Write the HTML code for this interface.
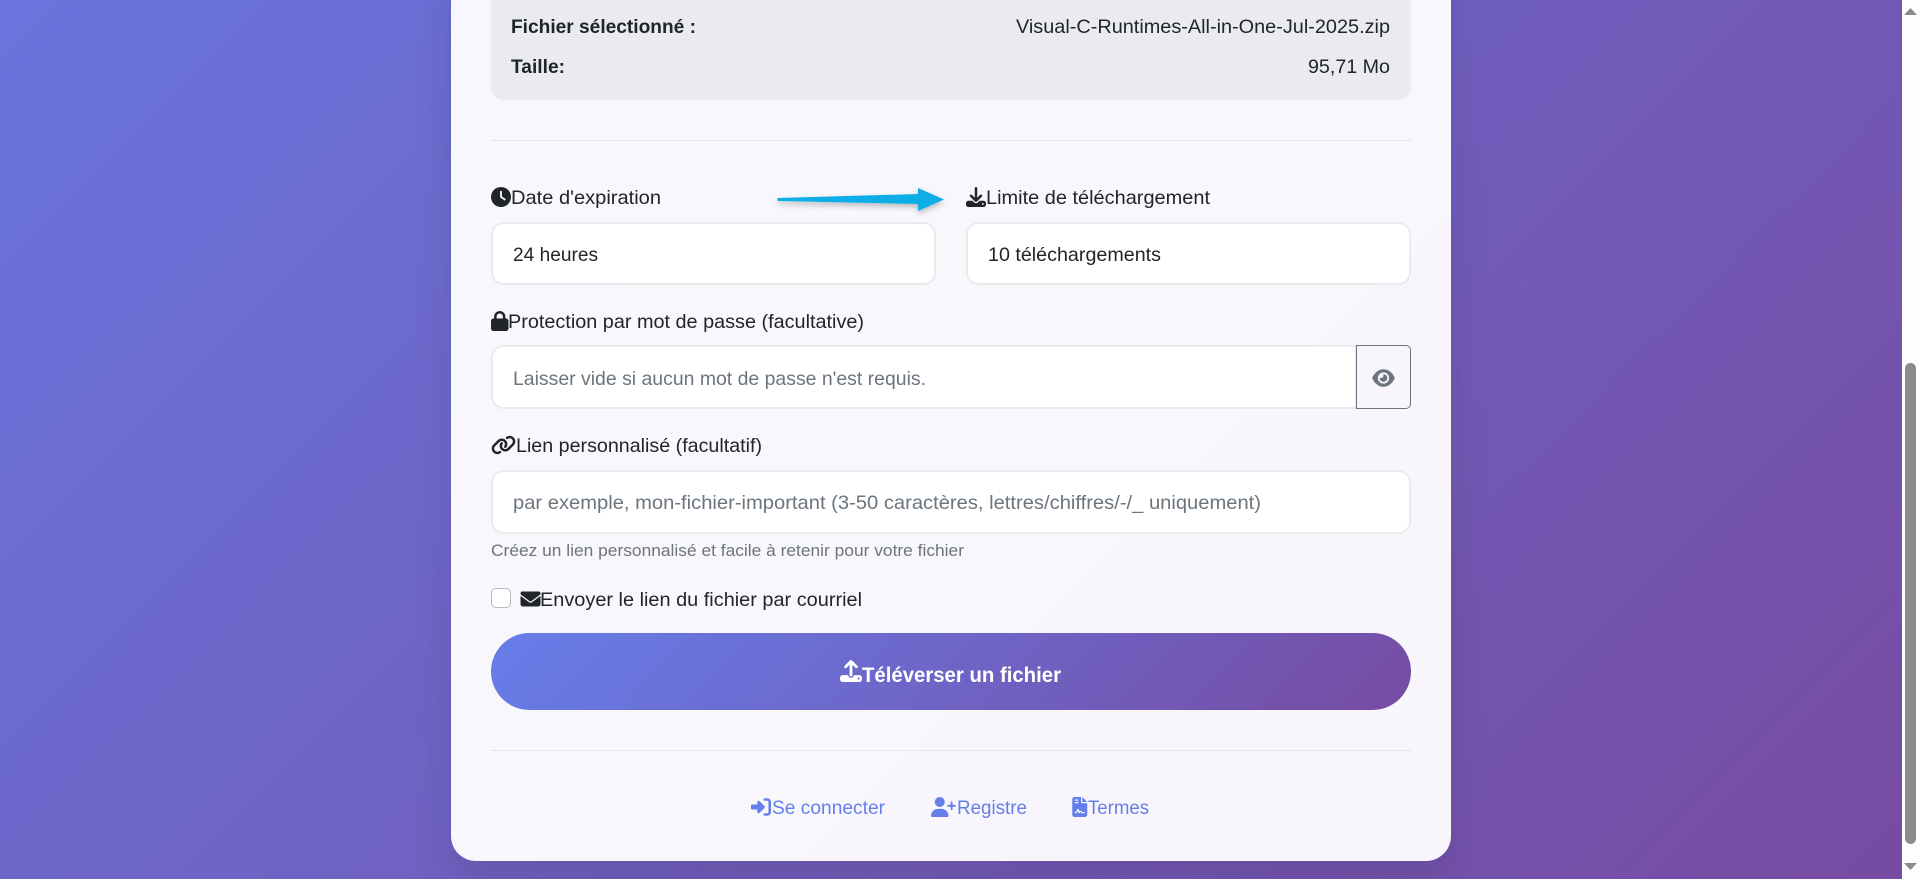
<!DOCTYPE html>
<html lang="fr"><head><meta charset="utf-8"><title>Téléverser un fichier</title>
<style>
html,body{margin:0;padding:0;width:1920px;height:879px;overflow:hidden;background:#fdfdfd}
#clip{position:absolute;left:0;top:0;width:1902px;height:879px;overflow:hidden}
#bg{position:absolute;left:0;top:-636px;width:1902px;height:1515px;background:linear-gradient(135deg,#667eea 0%,#764ba2 100%)}
#card{position:absolute;left:451px;top:-200px;width:1000px;height:1061px;border-radius:25px;background:rgba(255,255,255,.95);box-shadow:0 20px 40px rgba(0,0,0,.1)}
.a{position:absolute;box-sizing:border-box}
.in{background:#fff;border:2px solid #e9ecef;border-radius:12.5px}
#sb{position:absolute;left:1902px;top:0;width:18px;height:879px;background:#fdfdfd}
svg{position:absolute;left:0;top:0}
text{font-family:"Liberation Sans",sans-serif;font-size:19.5px;fill:#212529}
.ph{fill:#6c757d}.b{font-weight:700}.l{fill:#667eea}
</style></head><body>
<div id="clip"><div id="bg"></div>
<div id="card"></div></div>
<div class="a" style="left:491px;top:-40px;width:920px;height:139.5px;background:#e9ebef;border-radius:12.5px"></div>
<div class="a" style="left:491px;top:140px;width:920px;height:1px;background:#e4e6ea"></div>
<div class="a in" style="left:491px;top:221.5px;width:445px;height:63px"></div>
<div class="a in" style="left:966px;top:221.5px;width:445px;height:63px"></div>
<div class="a in" style="left:491px;top:345px;width:866px;height:64px;border-radius:12.5px 0 0 12.5px"></div>
<div class="a" style="left:1356px;top:345px;width:55px;height:64px;border:1px solid #6c757d;border-radius:0 5px 5px 0"></div>
<div class="a in" style="left:491px;top:470px;width:920px;height:63.5px"></div>
<div class="a" style="left:491px;top:588px;width:20px;height:20px;background:#fff;border:1px solid #b5bac0;border-radius:5px"></div>
<div class="a" style="left:491px;top:633px;width:920px;height:77px;border-radius:50px;background:linear-gradient(135deg,#667eea 0%,#764ba2 100%)"></div>
<div class="a" style="left:491px;top:750px;width:920px;height:1px;background:#e4e6ea"></div>
<svg width="1920" height="879" viewBox="0 0 1920 879" xmlns="http://www.w3.org/2000/svg">
<defs><filter id="s" x="-10%" y="-100%" width="120%" height="300%"><feDropShadow dx="0" dy="3" stdDeviation="3" flood-color="#000" flood-opacity=".25"/></filter></defs>
<text class="b" x="511" y="33" textLength="185" lengthAdjust="spacingAndGlyphs">Fichier sélectionné :</text>
<text class="b" x="511" y="73" textLength="54" lengthAdjust="spacingAndGlyphs">Taille:</text>
<text x="1016" y="33" textLength="374" lengthAdjust="spacingAndGlyphs">Visual-C-Runtimes-All-in-One-Jul-2025.zip</text>
<text x="1308" y="73" textLength="82" lengthAdjust="spacingAndGlyphs">95,71 Mo</text>

<svg x="491" y="187" width="20" height="20" viewBox="0 0 512 512"><path fill="#212529" d="M256 0a256 256 0 1 1 0 512A256 256 0 1 1 256 0zM232 120V256c0 8 4 15.500 10.700 20l96 64c11 7.400 25.900 4.400 33.300-6.700s4.400-25.900-6.700-33.300L280 243.200V120c0-13.300-10.700-24-24-24s-24 10.700-24 24z"/></svg>
<text x="511" y="204" textLength="150" lengthAdjust="spacingAndGlyphs">Date d'expiration</text>
<path d="M778 198 L918 194 L918 188 L944 199.500 L918 211 L918 204 L778 201 Q776.500 199.500 778 198 Z" fill="#0dade8" filter="url(#s)"/>
<svg x="966" y="187" width="20" height="20" viewBox="0 0 512 512"><path fill="#212529" d="M288 32c0-17.700-14.300-32-32-32s-32 14.300-32 32V274.700l-73.400-73.400c-12.500-12.500-32.800-12.500-45.300 0s-12.500 32.800 0 45.300l128 128c12.500 12.500 32.800 12.500 45.300 0l128-128c12.500-12.500 12.500-32.800 0-45.300s-32.800-12.500-45.300 0L288 274.700V32zM64 352c-35.300 0-64 28.700-64 64v32c0 35.300 28.700 64 64 64H448c35.300 0 64-28.700 64-64V416c0-35.300-28.700-64-64-64H346.500l-45.300 45.300c-25 25-65.500 25-90.500 0L165.500 352H64zm368 56a24 24 0 1 1 0 48 24 24 0 1 1 0-48z"/></svg>
<text x="986" y="204" textLength="224" lengthAdjust="spacingAndGlyphs">Limite de téléchargement</text>
<text x="513" y="261" textLength="85" lengthAdjust="spacingAndGlyphs">24 heures</text>
<text x="988" y="261" textLength="173" lengthAdjust="spacingAndGlyphs">10 téléchargements</text>

<svg x="491" y="311" width="17.500" height="20" viewBox="0 0 448 512"><path fill="#212529" d="M144 144v48H304V144c0-44.200-35.800-80-80-80s-80 35.800-80 80zM80 192V144C80 64.500 144.500 0 224 0s144 64.500 144 144v48h16c35.300 0 64 28.700 64 64V448c0 35.300-28.700 64-64 64H64c-35.300 0-64-28.700-64-64V256c0-35.300 28.700-64 64-64H80z"/></svg>
<text x="508" y="328" textLength="356" lengthAdjust="spacingAndGlyphs">Protection par mot de passe (facultative)</text>
<text class="ph" x="513" y="385" textLength="413" lengthAdjust="spacingAndGlyphs">Laisser vide si aucun mot de passe n'est requis.</text>
<svg x="1372" y="368" width="23" height="20" viewBox="0 0 576 512"><path fill="#6c757d" d="M288 32c-80.800 0-145.500 36.800-192.600 80.600C48.600 156 17.300 208 2.500 243.700c-3.300 7.900-3.300 16.700 0 24.600C17.300 304 48.600 356 95.400 399.400C142.500 443.200 207.200 480 288 480s145.500-36.800 192.600-80.600c46.800-43.500 78.100-95.400 93-131.100c3.300-7.900 3.300-16.700 0-24.600c-14.900-35.700-46.200-87.700-93-131.100C433.500 68.800 368.800 32 288 32zM144 256a144 144 0 1 1 288 0 144 144 0 1 1 -288 0zm144-64c0 35.300-28.700 64-64 64c-7.100 0-13.900-1.200-20.300-3.300c-5.500-1.800-11.900 1.600-11.700 7.400c.3 6.900 1.300 13.800 3.200 20.700c13.700 51.200 66.400 81.600 117.600 67.900s81.600-66.400 67.900-117.600c-11.100-41.500-47.800-69.400-88.600-71.100c-5.800-.2-9.200 6.100-7.400 11.700c2.100 6.400 3.300 13.200 3.300 20.300z"/></svg>

<svg x="491" y="435" width="25" height="20" viewBox="0 0 640 512"><path fill="#212529" d="M579.800 267.700c56.500-56.500 56.500-148 0-204.500c-50-50-128.800-56.500-186.300-15.400l-1.600 1.100c-14.400 10.300-17.700 30.300-7.400 44.600s30.300 17.700 44.600 7.400l1.600-1.100c32.100-22.900 76-19.300 103.800 8.600c31.500 31.500 31.500 82.500 0 114L422.300 334.800c-31.500 31.500-82.500 31.500-114 0c-27.900-27.900-31.500-71.800-8.600-103.800l1.100-1.600c10.300-14.400 6.900-34.400-7.400-44.600s-34.400-6.900-44.600 7.400l-1.100 1.600C206.500 251.200 213 330 263 380c56.500 56.500 148 56.500 204.500 0L579.800 267.700zM60.200 244.300c-56.500 56.500-56.500 148 0 204.500c50 50 128.800 56.500 186.300 15.400l1.600-1.100c14.400-10.300 17.700-30.300 7.400-44.600s-30.300-17.700-44.600-7.400l-1.600 1.100c-32.100 22.900-76 19.300-103.800-8.600C74 372 74 321 105.500 289.500L217.700 177.200c31.500-31.500 82.500-31.500 114 0c27.900 27.900 31.500 71.800 8.600 103.900l-1.100 1.600c-10.300 14.400-6.900 34.400 7.400 44.600s34.400 6.900 44.600-7.400l1.100-1.600C433.500 260.800 427 182 377 132c-56.500-56.500-148-56.500-204.500 0L60.200 244.300z"/></svg>
<text x="516" y="452" textLength="246" lengthAdjust="spacingAndGlyphs">Lien personnalisé (facultatif)</text>
<text class="ph" x="513" y="509" textLength="748" lengthAdjust="spacingAndGlyphs">par exemple, mon-fichier-important (3-50 caractères, lettres/chiffres/-/_ uniquement)</text>
<text class="ph" x="491" y="556" style="font-size:17px" textLength="473" lengthAdjust="spacingAndGlyphs">Créez un lien personnalisé et facile à retenir pour votre fichier</text>

<svg x="520.500" y="589" width="20" height="20" viewBox="0 0 512 512"><path fill="#212529" d="M48 64C21.500 64 0 85.500 0 112c0 15.100 7.100 29.300 19.200 38.400L236.800 313.600c11.400 8.500 27 8.500 38.400 0L492.800 150.400c12.100-9.100 19.200-23.300 19.200-38.400c0-26.500-21.500-48-48-48H48zM0 176V384c0 35.300 28.700 64 64 64H448c35.300 0 64-28.700 64-64V176L294.400 339.200c-22.800 17.100-54 17.100-76.800 0L0 176z"/></svg>
<text x="540" y="606" textLength="322" lengthAdjust="spacingAndGlyphs">Envoyer le lien du fichier par courriel</text>

<svg x="840" y="660" width="22" height="22" viewBox="0 0 512 512"><path fill="#fff" d="M288 109.300V352c0 17.700-14.300 32-32 32s-32-14.300-32-32V109.300l-73.400 73.400c-12.500 12.500-32.800 12.500-45.300 0s-12.500-32.800 0-45.300l128-128c12.500-12.500 32.800-12.500 45.300 0l128 128c12.500 12.500 12.500 32.800 0 45.300s-32.800 12.500-45.300 0L288 109.300zM64 352H192c0 35.300 28.700 64 64 64s64-28.700 64-64H448c35.300 0 64 28.700 64 64v32c0 35.300-28.700 64-64 64H64c-35.300 0-64-28.700-64-64V416c0-35.300 28.700-64 64-64zM432 456a24 24 0 1 0 0-48 24 24 0 1 0 0 48z"/></svg>
<text class="b" x="862" y="682" style="fill:#fff;font-size:21.500px" textLength="199" lengthAdjust="spacingAndGlyphs">Téléverser un fichier</text>

<svg x="751" y="797" width="20" height="20" viewBox="0 0 512 512"><path fill="#667eea" d="M217.900 105.900L340.700 228.700c7.200 7.200 11.300 17.100 11.300 27.300s-4.100 20.100-11.300 27.300L217.900 406.100c-6.400 6.400-15 9.900-24 9.900c-18.700 0-33.900-15.200-33.900-33.900l0-62.100L32 320c-17.700 0-32-14.300-32-32l0-64c0-17.700 14.300-32 32-32l128 0 0-62.100c0-18.700 15.200-33.900 33.900-33.900c9 0 17.600 3.600 24 9.900zM352 416l64 0c17.700 0 32-14.300 32-32l0-256c0-17.700-14.300-32-32-32l-64 0c-17.700 0-32-14.300-32-32s14.300-32 32-32l64 0c53 0 96 43 96 96l0 256c0 53-43 96-96 96l-64 0c-17.700 0-32-14.300-32-32s14.300-32 32-32z"/></svg>
<text class="l" x="772" y="814" textLength="113" lengthAdjust="spacingAndGlyphs">Se connecter</text>
<svg x="931" y="797" width="25" height="20" viewBox="0 0 640 512"><path fill="#667eea" d="M96 128a128 128 0 1 1 256 0A128 128 0 1 1 96 128zM0 482.300C0 383.800 79.800 304 178.300 304h91.400C368.200 304 448 383.800 448 482.300c0 16.400-13.300 29.700-29.700 29.700H29.700C13.300 512 0 498.700 0 482.300zM504 312V248H440c-13.300 0-24-10.700-24-24s10.700-24 24-24h64V136c0-13.300 10.700-24 24-24s24 10.700 24 24v64h64c13.300 0 24 10.700 24 24s-10.700 24-24 24H552v64c0 13.300-10.700 24-24 24s-24-10.700-24-24z"/></svg>
<text class="l" x="957" y="814" textLength="70" lengthAdjust="spacingAndGlyphs">Registre</text>
<svg x="1072" y="797" width="15.500" height="20" viewBox="0 0 384 512"><path fill="#667eea" d="M64 0C28.700 0 0 28.700 0 64V448c0 35.300 28.700 64 64 64H320c35.300 0 64-28.700 64-64V160H256c-17.700 0-32-14.300-32-32V0H64zM256 0V128H384L256 0zM80 64h64c8.800 0 16 7.200 16 16s-7.200 16-16 16H80c-8.800 0-16-7.200-16-16s7.200-16 16-16zm0 64h64c8.800 0 16 7.200 16 16s-7.200 16-16 16H80c-8.800 0-16-7.200-16-16s7.200-16 16-16zm54.200 253.800c-6.100 20.300-24.800 34.200-46 34.200H80c-8.800 0-16-7.200-16-16s7.200-16 16-16h8.200c7.100 0 13.300-4.600 15.300-11.400l14.900-49.500c3.400-11.300 13.800-19.100 25.600-19.100s22.200 7.700 25.600 19.100l11.600 38.600c7.400-6.200 16.800-9.700 26.800-9.700c15.900 0 30.400 9 37.500 23.200l4.400 8.800H304c8.800 0 16 7.200 16 16s-7.200 16-16 16H240c-6.100 0-11.600-3.400-14.300-8.800l-8.800-17.700c-1.700-3.400-5.100-5.500-8.800-5.500s-7.200 2.100-8.800 5.500l-8.800 17.700c-2.900 5.900-9.200 9.400-15.700 8.800s-12.100-5.100-13.900-11.300L144 349l-9.800 32.800z"/></svg>
<text class="l" x="1088" y="814" textLength="61" lengthAdjust="spacingAndGlyphs">Termes</text>
</svg>
<div id="sb">
<div class="a" style="left:3px;top:363px;width:11px;height:481px;background:#8b8b8b;border-radius:6px"></div>
<svg width="18" height="879" viewBox="0 0 18 879"><path d="M2 15 L8.500 8 L15 15 Z M2 863 L15 863 L8.500 870 Z" fill="#8b8b8b"/></svg>
</div>
</body></html>
